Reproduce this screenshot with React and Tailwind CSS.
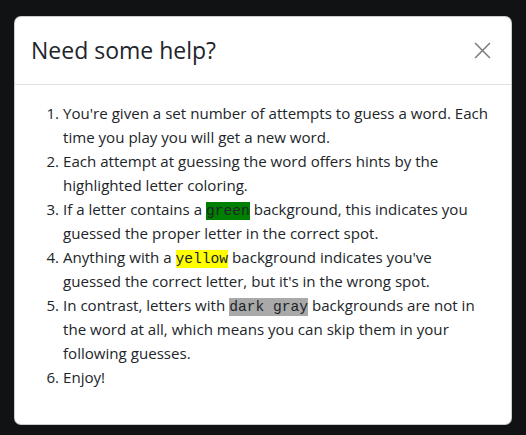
import React from 'react';

const Code = ({ children, bg }) => (
  <code className={`font-['Liberation_Mono',monospace] text-[14.6px] leading-none py-[1px] text-[#212529] ${bg}`}>{children}</code>
);

export default function App() {
  return (
    <div className="min-h-screen h-[435px] bg-[#111214] pt-4 px-[14px] font-['Open_Sans',sans-serif] text-[#212529]">
      <div className="w-[498px] bg-white rounded-[7px] border border-black/20">
        <div className="flex items-center justify-between h-[68px] px-4 border-b border-[#dee2e6]">
          <h5 className="text-[23px] font-medium leading-none">Need some help?</h5>
          <button className="w-6 h-6 flex items-center justify-center text-[#7a7a7a] mr-[1px]">
            <svg width="17" height="17" viewBox="0 0 16 16" fill="none" stroke="currentColor" strokeWidth="1.4">
              <path d="M1 1L15 15M15 1L1 15" />
            </svg>
          </button>
        </div>
        <div className="px-4 pt-4 pb-[19px]">
          <ol className="list-decimal pl-8 pr-1 mb-4 text-[15.1px] leading-6">
            <li>You're given a set number of attempts to guess a word. Each time you play you will get a new word.</li>
            <li>Each attempt at guessing the word offers hints by the highlighted letter coloring.</li>
            <li>If a letter contains a <Code bg="bg-[#008000]">green</Code> background, this indicates you guessed the proper letter in the correct spot.</li>
            <li>Anything with a <Code bg="bg-[#ffff00]">yellow</Code> background indicates you've guessed the correct letter, but it's in the wrong spot.</li>
            <li>In contrast, letters with <Code bg="bg-[#a9a9a9]">dark gray</Code> backgrounds are not in the word at all, which means you can skip them in your following guesses.</li>
            <li>Enjoy!</li>
          </ol>
        </div>
      </div>
    </div>
  );
}
